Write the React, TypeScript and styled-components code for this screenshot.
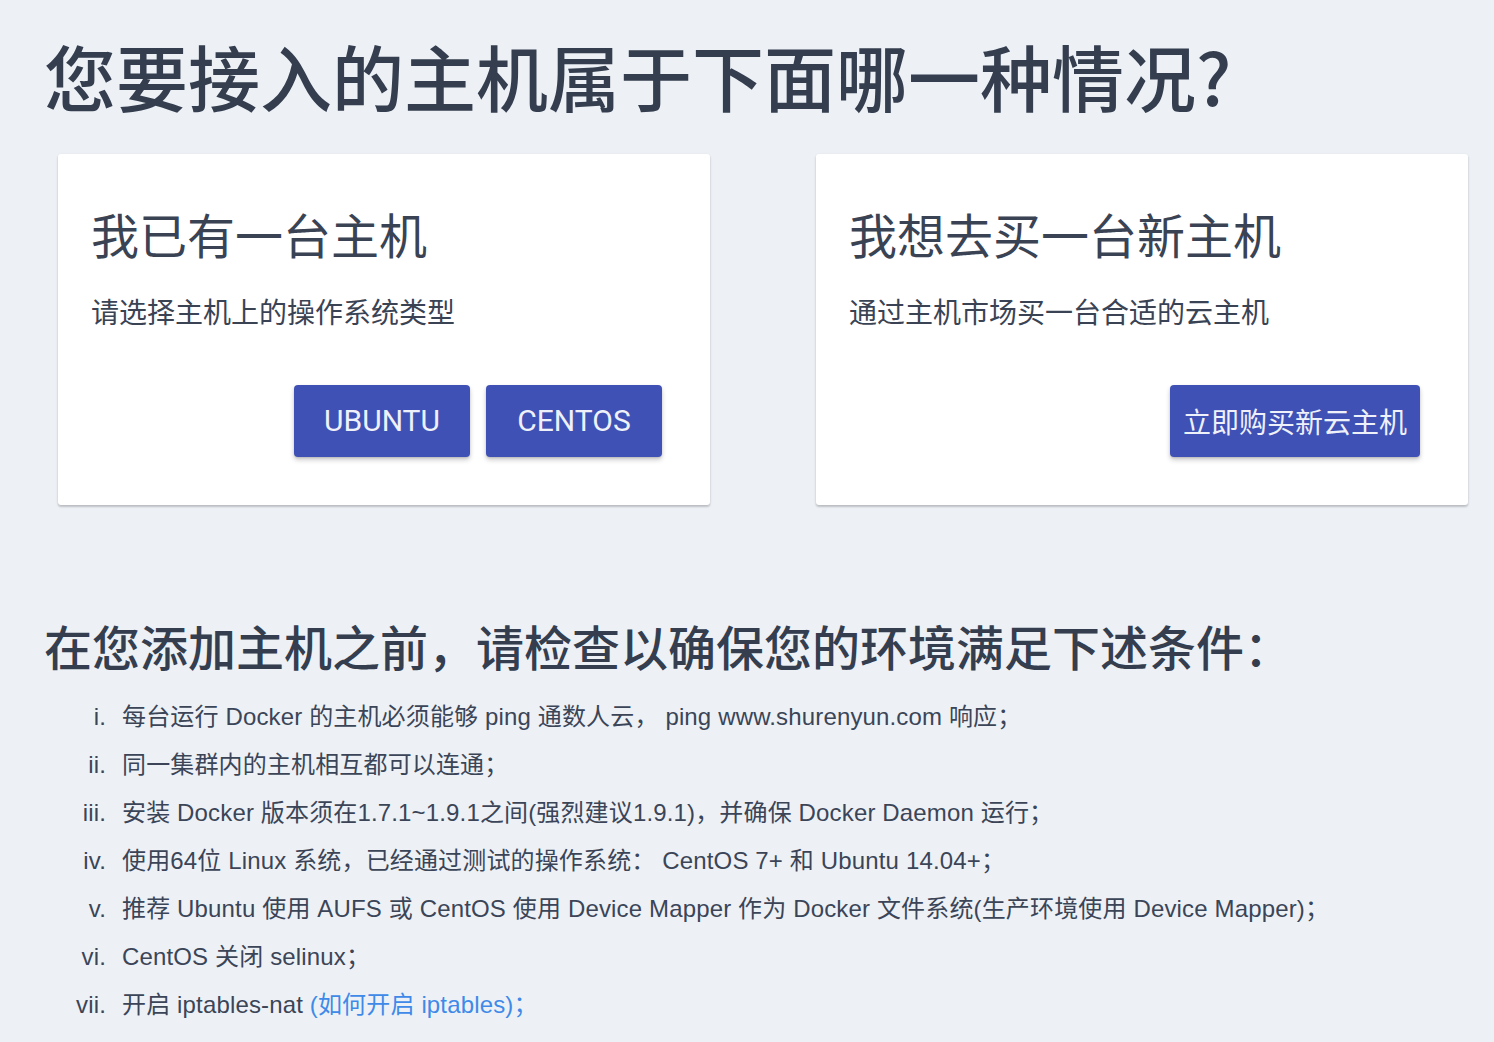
import React from "react";
import styled, { createGlobalStyle } from "styled-components";

const GlobalStyle = createGlobalStyle`
  html, body {
    margin: 0;
    padding: 0;
    background-color: #edf1f6;
  }
  body {
    font-family: "Liberation Sans", "Noto Sans CJK SC", sans-serif;
    color: #364051;
  }
`;

const Page = styled.div`
  min-height: 1042px;
  box-sizing: border-box;
  padding: 32px 26px 0 44px;
`;

const PageTitle = styled.h1`
  margin: 0;
  font-family: "Noto Sans CJK SC", sans-serif;
  font-size: 72px;
  font-weight: 500;
  line-height: 1.2;
  color: #343e4f;
`;

const Cards = styled.div`
  display: grid;
  grid-template-columns: 652px 652px;
  justify-content: space-between;
  margin: 36px 0 0 14px;
`;

const Card = styled.div`
  background: #ffffff;
  border-radius: 3px;
  box-shadow: 0 1px 3px rgba(0, 0, 0, 0.12), 0 2px 2px rgba(0, 0, 0, 0.14);
  padding: 51px 48px 48px 33px;
  display: flex;
  flex-direction: column;
`;

const CardTitle = styled.h2`
  margin: 0;
  font-family: "Noto Sans CJK SC", sans-serif;
  font-size: 48px;
  font-weight: 400;
  line-height: 1.2;
  color: #3a4354;
`;

const CardText = styled.p`
  margin: 27px 0 0;
  font-family: "Noto Sans CJK SC", sans-serif;
  font-size: 28px;
  line-height: 42px;
  color: #3a4354;
`;

const Actions = styled.div`
  display: flex;
  justify-content: flex-end;
  gap: 16px;
  margin-top: 53px;
`;

const Button = styled.button<{ $cjk?: boolean }>`
  min-width: 176px;
  height: 72px;
  padding: 0 13px;
  border: none;
  border-radius: 4px;
  background-color: #3f51b5;
  color: #eef0fa;
  font-family: Roboto, "Noto Sans CJK SC", sans-serif;
  font-size: ${(p) => (p.$cjk ? "28px" : "30px")};
  font-weight: 400;
  box-shadow: 0 3px 5px rgba(0, 0, 0, 0.2), 0 1px 2px rgba(0, 0, 0, 0.12);
  cursor: pointer;
`;

const SectionTitle = styled.h2`
  margin: 112px 0 0;
  font-family: "Noto Sans CJK SC", sans-serif;
  font-size: 48px;
  font-weight: 500;
  line-height: 1.2;
  color: #343e4f;
`;

const List = styled.ol`
  list-style: none;
  margin: 18px 0 0;
  padding: 0;
`;

const Item = styled.li`
  display: flex;
  font-size: 24px;
  line-height: 48px;
  letter-spacing: 0.15px;
  color: #3b4557;
`;

const Marker = styled.span`
  flex: 0 0 62px;
  text-align: right;
  margin-right: 16px;
`;

const Link = styled.a`
  color: #3f8ae8;
  text-decoration: none;
`;

const rules: React.ReactNode[] = [
  "每台运行 Docker 的主机必须能够 ping 通数人云， ping www.shurenyun.com 响应；",
  "同一集群内的主机相互都可以连通；",
  "安装 Docker 版本须在1.7.1~1.9.1之间(强烈建议1.9.1)，并确保 Docker Daemon 运行；",
  "使用64位 Linux 系统，已经通过测试的操作系统： CentOS 7+ 和 Ubuntu 14.04+；",
  "推荐 Ubuntu 使用 AUFS 或 CentOS 使用 Device Mapper 作为 Docker 文件系统(生产环境使用 Device Mapper)；",
  "CentOS 关闭 selinux；",
  <>
    开启 iptables-nat <Link href="#">(如何开启 iptables)；</Link>
  </>,
];

const numerals = ["i.", "ii.", "iii.", "iv.", "v.", "vi.", "vii."];

export default function App() {
  return (
    <Page>
      <GlobalStyle />
      <PageTitle>您要接入的主机属于下面哪一种情况?</PageTitle>
      <Cards>
        <Card>
          <CardTitle>我已有一台主机</CardTitle>
          <CardText>请选择主机上的操作系统类型</CardText>
          <Actions>
            <Button>UBUNTU</Button>
            <Button>CENTOS</Button>
          </Actions>
        </Card>
        <Card>
          <CardTitle>我想去买一台新主机</CardTitle>
          <CardText>通过主机市场买一台合适的云主机</CardText>
          <Actions>
            <Button $cjk>立即购买新云主机</Button>
          </Actions>
        </Card>
      </Cards>
      <SectionTitle>在您添加主机之前，请检查以确保您的环境满足下述条件：</SectionTitle>
      <List>
        {rules.map((rule, index) => (
          <Item key={index}>
            <Marker>{numerals[index]}</Marker>
            <span>{rule}</span>
          </Item>
        ))}
      </List>
    </Page>
  );
}
